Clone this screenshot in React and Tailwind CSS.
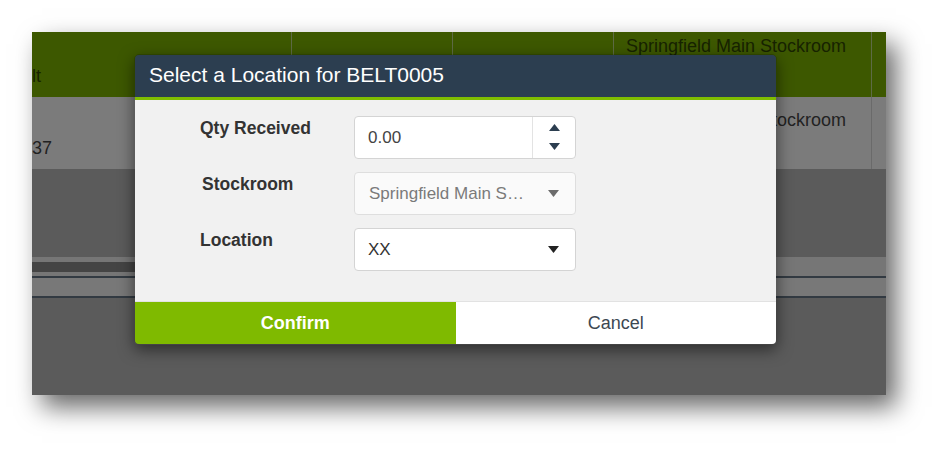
import React from "react";

const Tri = ({ dir = "down", color = "#333", className = "" }) => (
  <svg width="11" height="7" viewBox="0 0 11 7" className={className}>
    {dir === "down" ? (
      <polygon points="0,0 11,0 5.5,7" fill={color} />
    ) : (
      <polygon points="0,7 11,7 5.5,0" fill={color} />
    )}
  </svg>
);

export default function App() {
  return (
    <div
      className="w-[951px] h-[460px] bg-white pl-[32px] pt-[32px]"
      style={{ fontFamily: '"Liberation Sans", Arial, sans-serif' }}
    >
      <div className="relative w-[854px] h-[363px] overflow-hidden bg-[#5b5b5b] shadow-[10px_12px_24px_rgba(0,0,0,0.6)]">
        {/* green header row */}
        <div className="flex h-[65px] bg-[#3d5800] text-[18px] text-[#172300]">
          <div className="w-[260px] shrink-0 border-r border-[#5e6b45] pt-[34px] leading-[21px]">lt</div>
          <div className="w-[161px] shrink-0 border-r border-[#5e6b45]" />
          <div className="w-[161px] shrink-0 border-r border-[#5e6b45]" />
          <div className="w-[258px] shrink-0 border-r border-[#5e6b45] pl-[12px] pt-[4px] leading-[21px] whitespace-nowrap">
            Springfield Main Stockroom
          </div>
          <div className="flex-1" />
        </div>
        {/* gray data row */}
        <div className="flex h-[72px] bg-[#7b7b7b] text-[18px] text-[#222]">
          <div className="w-[260px] shrink-0 border-r border-[#6a6a6a] pt-[41px] leading-[21px]">37</div>
          <div className="w-[161px] shrink-0 border-r border-[#6a6a6a]" />
          <div className="w-[161px] shrink-0 border-r border-[#6a6a6a]" />
          <div className="w-[258px] shrink-0 border-r border-[#6a6a6a] pl-[12px] pt-[13px] leading-[21px] whitespace-nowrap">
            Springfield Main Stockroom
          </div>
          <div className="flex-1" />
        </div>
        {/* dark area */}
        <div className="h-[88px] bg-[#5b5b5b]" />
        {/* scrollbar band */}
        <div className="flex h-[19px] bg-[#767676]">
          <div className="w-[300px] pt-[5px]">
            <div className="h-[10px] bg-[#444444]" />
          </div>
        </div>
        <div className="h-[2px] bg-[#323a42]" />
        <div className="h-[18px] bg-[#787878]" />
        <div className="h-[2px] bg-[#323a42]" />

        {/* modal dialog */}
        <div className="absolute left-[102px] top-[22px] w-[643px] h-[291px] rounded-[5px] overflow-hidden border border-[rgba(0,0,0,0.25)] shadow-[0_5px_15px_rgba(0,0,0,0.5)] flex flex-col">
          <div className="h-[42px] bg-[#2c3e50] flex items-center px-[14px] pb-[4px]">
            <span className="text-[21px] text-white leading-none">Select a Location for BELT0005</span>
          </div>
          <div className="h-[3px] bg-[#80bd01]" />
          <div className="h-[202px] bg-[#f1f1f1] pt-[16px] pl-[65px] flex flex-col gap-[13px] border-b border-[#e2e2e2]">
            <div className="flex">
              <div className="w-[154px] pt-[2px] text-[17.5px] leading-[20px] font-bold text-[#333]">Qty Received</div>
              <div className="w-[222px] h-[43px] bg-white border border-[#d4d4d4] rounded-[4px] flex">
                <div className="flex-1 flex items-center pl-[13px] text-[17px] text-[#444]">0.00</div>
                <div className="w-[43px] border-l border-[#e3e3e3] flex flex-col items-center justify-center gap-[12px] pb-[2px]">
                  <Tri dir="up" color="#2c3e50" />
                  <Tri dir="down" color="#2c3e50" />
                </div>
              </div>
            </div>
            <div className="flex">
              <div className="w-[154px] pt-[2px] pl-[2px] text-[17.5px] leading-[20px] font-bold text-[#333]">Stockroom</div>
              <div className="w-[222px] h-[43px] bg-[#fafafa] border border-[#dedede] rounded-[4px] flex items-center pl-[14px] pr-[16px]">
                <span className="flex-1 text-[17px] text-[#7a7a7a] whitespace-nowrap">Springfield Main S…</span>
                <Tri dir="down" color="#6b6b6b" />
              </div>
            </div>
            <div className="flex">
              <div className="w-[154px] pt-[2px] text-[17.5px] leading-[20px] font-bold text-[#333]">Location</div>
              <div className="w-[222px] h-[43px] bg-white border border-[#d4d4d4] rounded-[4px] flex items-center pl-[13px] pr-[16px]">
                <span className="flex-1 text-[17px] text-[#333]">XX</span>
                <Tri dir="down" color="#222" />
              </div>
            </div>
          </div>
          <div className="flex-1 flex">
            <div className="flex-1 bg-[#7fba00] flex items-center justify-center text-[18px] font-bold text-white">
              Confirm
            </div>
            <div className="flex-1 bg-white flex items-center justify-center text-[18px] text-[#3d4852]">
              Cancel
            </div>
          </div>
        </div>
      </div>
    </div>
  );
}
